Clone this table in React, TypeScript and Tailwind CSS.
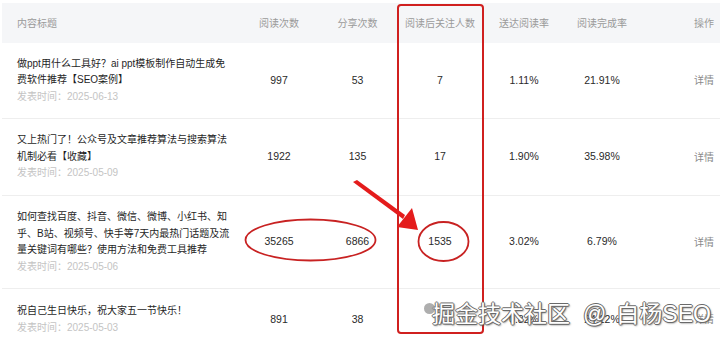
import React from 'react'

interface Row {
  title: string[]
  date: string
  reads: string
  shares: string
  follows: string
  deliverRate: string
  finishRate: string
  height: string
}

const rows: Row[] = [
  {
    title: ['做ppt用什么工具好？ai ppt模板制作自动生成免', '费软件推荐【SEO案例】'],
    date: '2025-06-13',
    reads: '997',
    shares: '53',
    follows: '7',
    deliverRate: '1.11%',
    finishRate: '21.91%',
    height: 'h-[76px]',
  },
  {
    title: ['又上热门了！公众号及文章推荐算法与搜索算法', '机制必看【收藏】'],
    date: '2025-05-09',
    reads: '1922',
    shares: '135',
    follows: '17',
    deliverRate: '1.90%',
    finishRate: '35.98%',
    height: 'h-[77px]',
  },
  {
    title: [
      '如何查找百度、抖音、微信、微博、小红书、知',
      '乎、B站、视频号、快手等7天内最热门话题及流',
      '量关键词有哪些？使用方法和免费工具推荐',
    ],
    date: '2025-05-06',
    reads: '35265',
    shares: '6866',
    follows: '1535',
    deliverRate: '3.02%',
    finishRate: '6.79%',
    height: 'h-[93px]',
  },
  {
    title: ['祝自己生日快乐，祝大家五一节快乐！'],
    date: '2025-05-03',
    reads: '891',
    shares: '38',
    follows: '2',
    deliverRate: '0.82%',
    finishRate: '24.12%',
    height: 'h-[62px]',
  },
]

const cols = 'grid grid-cols-[238px_78px_79px_86px_82px_74px_1fr]'
const font = { fontFamily: '"Liberation Sans", "Noto Sans CJK SC", sans-serif' }

export default function App() {
  return (
    <div className="relative w-[720px] h-[347px] overflow-hidden bg-white pt-[3px] pl-[2px]" style={font}>
      {/* Header */}
      <div className={`${cols} h-[40px] items-center bg-[#f5f6f8] text-[10px] text-[#9a9a9a]`}>
        <div className="pl-[15px]">内容标题</div>
        <div className="text-center">阅读次数</div>
        <div className="text-center">分享次数</div>
        <div className="text-center">阅读后关注人数</div>
        <div className="text-center">送达阅读率</div>
        <div className="text-center">阅读完成率</div>
        <div className="text-right pr-[6px]">操作</div>
      </div>

      {rows.map((r, i) => (
        <div key={i} className={`${cols} ${r.height} items-center border-b border-[#eeeeee] text-[10.5px] text-[#2a2a2a]`}>
          <div className="pl-[15px] text-[10px] leading-[16.5px] text-[#1f1f1f]">
            {r.title.map((line, j) => (
              <div key={j} className="whitespace-nowrap">{line}</div>
            ))}
            <div className="whitespace-nowrap text-[#c4c4c4]">发表时间：{r.date}</div>
          </div>
          <div className="text-center">{r.reads}</div>
          <div className="text-center">{r.shares}</div>
          <div className="text-center">{r.follows}</div>
          <div className="text-center">{r.deliverRate}</div>
          <div className="text-center">{r.finishRate}</div>
          <div className="text-right pr-[6px] text-[10px] text-[#8a8a8a]">详情</div>
        </div>
      ))}

      {/* Red annotations */}
      <svg className="absolute left-0 top-0 pointer-events-none" width="720" height="347" viewBox="0 0 720 347">
        <rect x="398" y="5" width="85" height="328" rx="3" fill="none" stroke="#d0201f" strokeWidth="2" />
        <ellipse cx="310.5" cy="240" rx="65" ry="20.5" fill="none" stroke="#c82222" strokeWidth="1.8" />
        <ellipse cx="443.5" cy="241.5" rx="25" ry="19.5" fill="none" stroke="#c82222" strokeWidth="1.8" />
        <path d="M353 182 L357 180 L405 215 L403 219 Z" fill="#e41c1c" />
        <path d="M418 230 L397 227 L412 208 Z" fill="#e41c1c" />
      </svg>

      {/* Watermark */}
      <div
        className="absolute left-[424px] top-[303px] flex items-center text-[23px] leading-none text-white [text-shadow:-1px_0_#6a6a6a,1px_0_#6a6a6a,0_-1px_#6a6a6a,0_1px_#6a6a6a,1px_1px_2px_#444]"
        style={font}
      >
        <span className="w-[11px] h-[11px] rounded-full bg-[#9a9a9a] opacity-80 -mr-[3px] mb-[12px]" />
        <span>掘金技术社区</span>
        <span className="ml-[13px]">@</span>
        <span className="ml-[10px]">白杨SEO</span>
      </div>
    </div>
  )
}
